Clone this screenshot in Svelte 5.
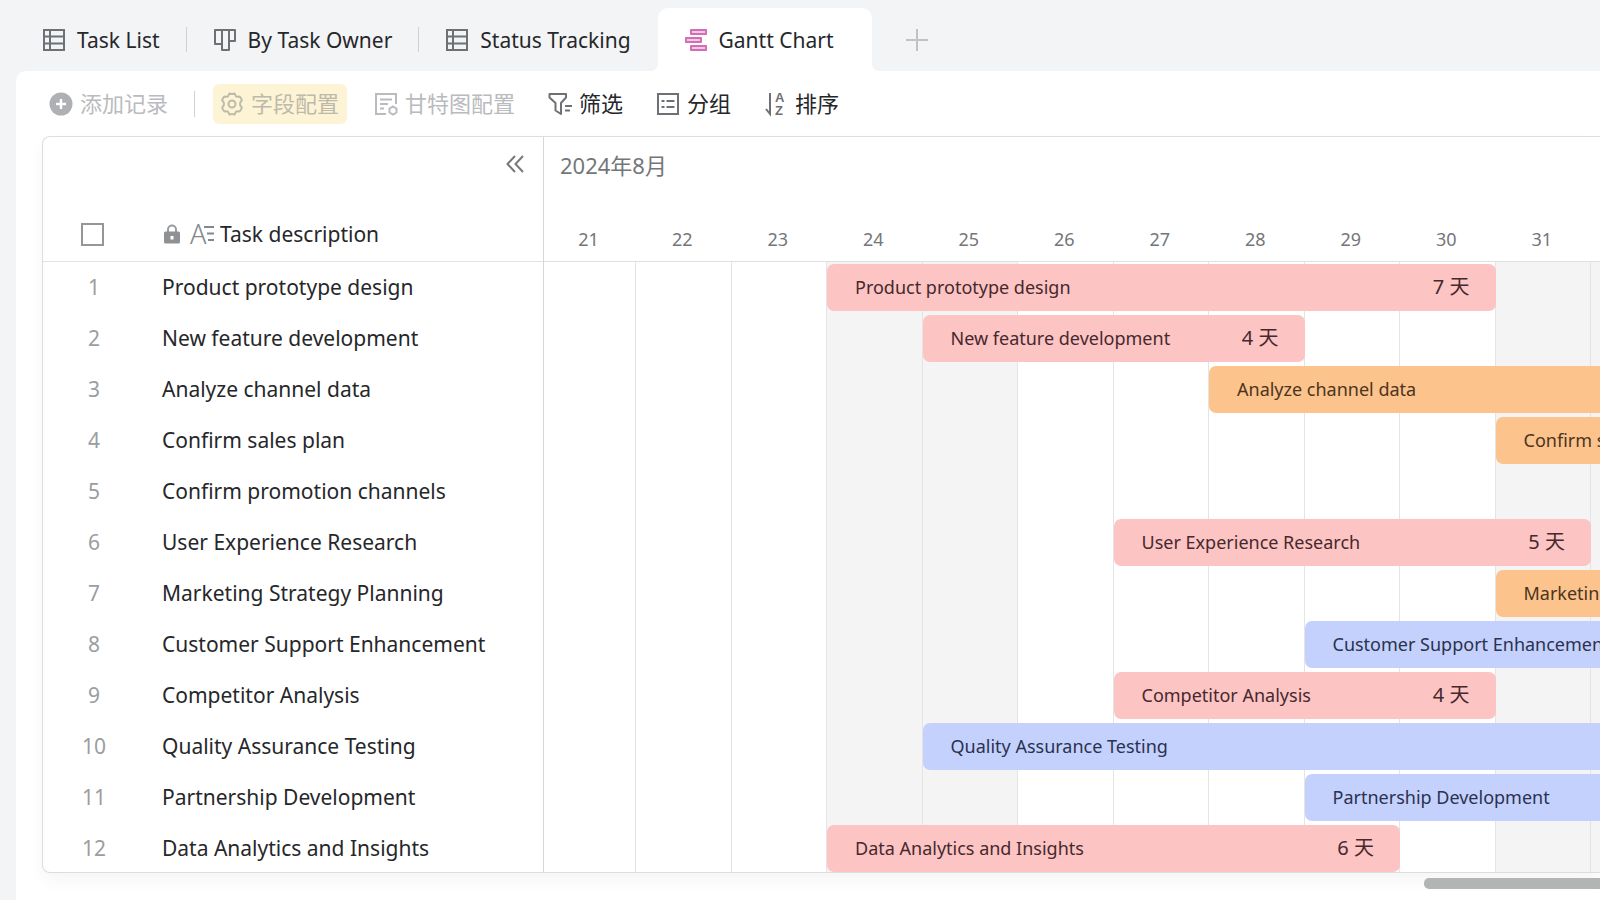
<script>
  const tabs = [
    { name: 'Task List', icon: 'table' },
    { name: 'By Task Owner', icon: 'board' },
    { name: 'Status Tracking', icon: 'table' },
    { name: 'Gantt Chart', icon: 'gantt' }
  ]
  let active = $state('Gantt Chart')
  let collapsed = $state(false)

  const firstDay = 21
  const days = [21, 22, 23, 24, 25, 26, 27, 28, 29, 30, 31]
  const weekend = [24, 25, 31, 32]

  // end is the day after the last one; 33 runs off the visible range
  const tasks = [
    { name: 'Product prototype design', start: 24, end: 31, color: 'pink' },
    { name: 'New feature development', start: 25, end: 29, color: 'pink' },
    { name: 'Analyze channel data', start: 28, end: 33, color: 'orange' },
    { name: 'Confirm sales plan', start: 31, end: 33, color: 'orange' },
    { name: 'Confirm promotion channels' },
    { name: 'User Experience Research', start: 27, end: 32, color: 'pink' },
    { name: 'Marketing Strategy Planning', start: 31, end: 33, color: 'orange' },
    { name: 'Customer Support Enhancement', start: 29, end: 33, color: 'blue' },
    { name: 'Competitor Analysis', start: 27, end: 31, color: 'pink' },
    { name: 'Quality Assurance Testing', start: 25, end: 33, color: 'blue' },
    { name: 'Partnership Development', start: 29, end: 33, color: 'blue' },
    { name: 'Data Analytics and Insights', start: 24, end: 30, color: 'pink' }
  ]

  const col = (day) => day - firstDay + 1
</script>

<div class="app">
  <nav class="tabs">
    {#each tabs as tab}
      <button class="tab" class:active={active === tab.name} onclick={() => (active = tab.name)}>
        {#if tab.icon === 'table'}
          <svg width="22" height="22" viewBox="0 0 22 22" fill="none" stroke="#6d7074" stroke-width="2">
            <path d="M1 1h20v20H1zM7 1v20M1 7.5h20M1 14.5h20" />
          </svg>
        {:else if tab.icon === 'board'}
          <svg width="22" height="22" viewBox="0 0 22 22" fill="none" stroke="#6d7074" stroke-width="2" stroke-linejoin="round">
            <path d="M1 1h20v11h-6v9H8v-6H1zM8 1v14M15 1v11" />
          </svg>
        {:else}
          <svg width="22" height="22" viewBox="0 0 22 22" fill="#fbc4e8" stroke="#d16fb4" stroke-width="2" stroke-linejoin="round">
            <path d="M6 1h15v4H6zM1 9h15v4H1zM6 17h15v4H6z" />
          </svg>
        {/if}
        {tab.name}
      </button>
    {/each}
    <button class="add" aria-label="Add view">
      <svg width="22" height="22" viewBox="0 0 22 22" stroke="#c0c2c5" stroke-width="2">
        <path d="M11 0v22M0 11h22" />
      </svg>
    </button>
  </nav>

  <main class="panel">
    <div class="toolbar">
      <button class="tool muted">
        <svg width="24" height="24" viewBox="0 0 24 24">
          <circle cx="12" cy="12" r="11.5" fill="#afb0b3" />
          <path d="M12 7v10M7 12h10" stroke="#fff" stroke-width="2.4" />
        </svg>
        <span>添加记录</span>
      </button>
      <i class="sep"></i>
      <button class="tool muted marked">
        <svg width="24" height="24" viewBox="0 0 24 24" fill="none" stroke="#bdb9ab" stroke-width="2" stroke-linejoin="round">
          <path d="M9.5 1.5Q12 2.600 14.500 1.500L16 4.300Q17.500 5 19.500 4.500Q21.500 6 21.800 8.500Q20 10 20 12Q20 14 21.800 15.500Q21.500 18 19.500 19.500Q17.500 19 16 19.700L14.500 22.500Q12 21.400 9.500 22.500L8 19.700Q6.500 19 4.500 19.500Q2.500 18 2.200 15.500Q4 14 4 12Q4 10 2.200 8.500Q2.500 6 4.500 4.500Q6.500 5 8 4.300z" />
          <circle cx="12" cy="12" r="3.5" />
        </svg>
        <span>字段配置</span>
      </button>
      <button class="tool muted">
        <svg width="24" height="24" viewBox="0 0 24 24" fill="none" stroke="#b9bbbe" stroke-width="2">
          <path d="M12 22H2V2h20v10M6 7.5h12M6 12h8M6 16.5h4" />
          <path d="M19 14.5l3.500 2v4l-3.500 2-3.500-2v-4z" />
        </svg>
        <span>甘特图配置</span>
      </button>
      <button class="tool">
        <svg width="24" height="24" viewBox="0 0 24 24" fill="none" stroke="#6d7074" stroke-width="2" stroke-linejoin="round">
          <path d="M1.500 2h16.500v3.500L13 11v11L7.500 18.500V11L1.500 5.500z" />
          <path d="M17 14h7M17 18.500h5" />
        </svg>
        <span>筛选</span>
      </button>
      <button class="tool">
        <svg width="24" height="24" viewBox="0 0 24 24" fill="none" stroke="#6d7074" stroke-width="2">
          <path d="M2 2h20v20H2zM5.500 9h3M10.500 9h8M5.500 15h3M10.500 15h8" />
        </svg>
        <span>分组</span>
      </button>
      <button class="tool">
        <svg class="sort" width="24" height="24" viewBox="0 0 24 24" fill="none" stroke="#6d7074" stroke-width="2">
          <path d="M6 1v21L2 17" />
          <text x="11" y="10">A</text>
          <text x="11" y="23">Z</text>
        </svg>
        <span>排序</span>
      </button>
    </div>

    <div class="gantt">
      <section class="list" class:collapsed>
        <div class="list-top">
          <button class="fold" aria-label="Collapse" onclick={() => (collapsed = !collapsed)}>
            <svg width="18" height="18" viewBox="0 0 18 18" fill="none" stroke="#77797c" stroke-width="2">
              <path d="M9 1L1.500 9 9 17M17 1L9.500 9l7.500 8" />
            </svg>
          </button>
        </div>
        <table>
          <thead>
            <tr>
              <th class="num"><input type="checkbox" aria-label="Select all" /></th>
              <th>
                <div class="field">
                  <svg width="16" height="20" viewBox="0 0 16 20">
                    <path d="M4 9V5.500a4 4 0 0 1 8 0V9" fill="none" stroke="#999b9e" stroke-width="2" />
                    <rect y="7.500" width="16" height="12" rx="1.500" fill="#8f9194" />
                    <rect x="6.500" y="12" width="3" height="3.500" fill="#fff" />
                  </svg>
                  <svg class="type" width="26" height="22" viewBox="0 0 26 22" fill="none" stroke="#85878a" stroke-width="2">
                    <text x="0" y="21">A</text>
                    <path d="M14 4h10M17 10.500h7M18 17h6" />
                  </svg>
                  <span>Task description</span>
                </div>
              </th>
            </tr>
          </thead>
          <tbody>
            {#each tasks as task, i}
              <tr>
                <td class="num">{i + 1}</td>
                <td>{task.name}</td>
              </tr>
            {/each}
          </tbody>
        </table>
      </section>

      <section class="timeline">
        <header>
          <div class="month">2024年8月</div>
          <div class="days grid">
            {#each days as day}
              <span>{day}</span>
            {/each}
          </div>
        </header>
        <div class="chart">
          <div class="columns grid">
            {#each [...days, 32] as day}
              <i class:weekend={weekend.includes(day)}></i>
            {/each}
          </div>
          <div class="bars">
            {#each tasks as task}
              <div class="lane grid">
                {#if task.start}
                  <div
                    class="bar {task.color}"
                    class:open={task.end > 32}
                    style:grid-column="{col(task.start)} / {col(task.end)}"
                  >
                    <span>{task.name}</span>
                    {#if task.end <= 32}
                      <span class="length">{task.end - task.start} 天</span>
                    {/if}
                  </div>
                {/if}
              </div>
            {/each}
          </div>
        </div>
      </section>
    </div>
    <div class="scroll"><div class="thumb"></div></div>
  </main>
</div>

<style>
  :global(body) { background: #f3f4f6; overflow: hidden; }
  .app {
    min-height: 100vh; display: flex; flex-direction: column;
    font-family: 'Noto Sans', 'Noto Sans CJK SC', sans-serif;
    font-size: 21px; line-height: 28px; color: #26272a;
  }
  button {
    border: none; background: none; padding: 0; margin: 0;
    font: inherit; color: inherit; cursor: pointer;
    display: flex; align-items: center; white-space: nowrap;
  }
  svg { flex: none; display: block; overflow: visible; }

  .tabs { display: flex; align-items: stretch; height: 63px; padding: 8px 0 0 16px; }
  .tab { position: relative; gap: 12px; padding: 0 27px; }
  .tab:not(.active):not(:has(+ .active))::after {
    content: ''; position: absolute; right: 0; top: 19px;
    width: 1px; height: 25px; background: #cfd1d4;
  }
  .tab.active { background: #fff; border-radius: 10px 10px 0 0; padding-right: 38px; }
  .tab.active::before, .tab.active::after {
    content: ''; position: absolute; bottom: 0; width: 8px; height: 8px;
  }
  .tab.active::before { left: -8px; background: radial-gradient(circle at 0 0, transparent 8px, #fff 8px); }
  .tab.active::after { right: -8px; background: radial-gradient(circle at 100% 0, transparent 8px, #fff 8px); }
  .add { padding: 0 34px; }

  .panel {
    flex: 1; margin-left: 16px; padding-left: 26px;
    background: #fff; border-radius: 10px 0 0 0;
  }
  .toolbar { display: flex; align-items: center; height: 65px; font-size: 22px; }
  .tool { gap: 7px; height: 40px; padding: 0 7px; border-radius: 6px; margin-right: 19px; }
  .tool span { padding-bottom: 2px; }
  .tool.muted { color: #b9bbbe; }
  .tool.marked { background: #fdf4d6; color: #bdb9ab; margin-right: 20px; padding-right: 8px; }
  .sep { width: 1px; height: 26px; background: #cfd1d4; margin-right: 18px; }
  .sort text { fill: #6d7074; stroke: none; font: bold 13px 'Liberation Sans', sans-serif; }

  .gantt {
    display: flex; border: 1px solid #dcdddd; border-right: none;
    border-radius: 8px 0 0 8px; overflow: hidden;
    box-shadow: 0 8px 16px rgba(0, 0, 0, 0.04);
  }
  .list { flex: none; width: 500px; border-right: 1px solid #d6d8d8; }
  .list.collapsed { width: 102px; overflow: hidden; }
  .list-top { display: flex; justify-content: flex-end; height: 70px; }
  .fold { height: 54px; padding: 0 19px; }
  table { width: 500px; border-collapse: separate; border-spacing: 0; table-layout: fixed; }
  th { height: 54px; padding: 0 0 0 18px; border-bottom: 1px solid #e2e3e3; font-weight: 400; text-align: left; }
  td { height: 47px; padding: 1px 0 3px 18px; white-space: nowrap; }
  tr:last-child td { padding-bottom: 1px; }
  .num { box-sizing: content-box; width: 98px; padding-left: 0; padding-right: 3px; text-align: center; }
  td.num { color: #9b9da0; padding-left: 1px; padding-right: 0; }
  .field { display: flex; align-items: center; }
  .field svg { margin: 0 4px 0 2px; }
  .field svg + svg { margin-left: 6px; }
  .type text { fill: #85878a; stroke: none; font-size: 27px; font-weight: 300; }
  input {
    appearance: none; display: block; box-sizing: border-box; width: 23px; height: 23px; margin: 0 auto;
    border: 2px solid #949699; background: #fff;
  }
  input:checked { background: #949699; }

  .timeline { flex: 1; min-width: 0; overflow: hidden; display: flex; flex-direction: column; }
  /* the first day is cut by the list edge, the last one by the window edge */
  .grid { display: grid; grid-template-columns: minmax(0, 184fr) repeat(10, minmax(0, 191fr)) minmax(0, 18fr); }
  header { height: 124px; border-bottom: 1px solid #dfe0e0; color: #747679; }
  .month { height: 56px; padding-left: 16px; line-height: 56px; font-size: 22px; }
  .days { font-size: 18px; line-height: 28px; padding-top: 32px; }
  .days span { text-align: center; padding-right: 3px; }
  .chart { position: relative; flex: 1; }
  .columns { position: absolute; inset: 0; }
  .columns i { border-right: 1px solid #e3e4e4; }
  .columns i:last-child { border-right: none; }
  .columns .weekend { background: #f4f4f4; }
  .bars { position: relative; display: grid; grid-auto-rows: 47px; row-gap: 4px; padding-top: 2px; }
  .bar {
    display: flex; align-items: center; justify-content: space-between;
    box-sizing: border-box; height: 47px; padding: 0 26px 2px 28px; border-radius: 7px;
    font-size: 18px; white-space: nowrap; overflow: hidden;
  }
  .bar.open { border-radius: 7px 0 0 7px; padding-right: 0; }
  .length { font-size: 20px; }
  .pink { background: #fdc4c4; color: #45292d; }
  .orange { background: #fcc38c; color: #4b3520; }
  .blue { background: #c5d1fd; color: #2a3250; }

  .scroll { padding-top: 5px; }
  .thumb { width: 176px; height: 11px; margin-left: auto; border-radius: 5px 0 0 5px; background: #b3b5b5; }
</style>
